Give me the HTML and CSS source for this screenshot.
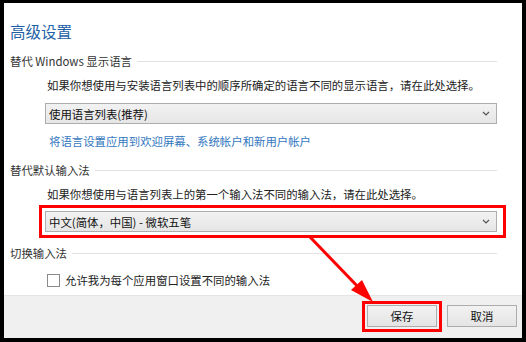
FILE: index.html
```html
<!DOCTYPE html>
<html lang="zh-CN">
  <head>
    <meta charset="UTF-8" />
    <title>高级设置</title>
    <link rel="stylesheet" href="styles.css">
  </head>
  <body>
    <div class="panel">
      <div class="content">
        <h1 class="title">高级设置</h1>

        <!-- 显示语言 -->
        <div class="group-header"><span>替代 Windows 显示语言</span></div>
        <p class="desc">如果你想使用与安装语言列表中的顺序所确定的语言不同的显示语言，请在此处选择。</p>
        <div class="dropdown dropdown-first">
          <span>使用语言列表(推荐)</span>
          <svg class="chevron" width="8" height="5" viewBox="0 0 8 5"><path d="M1 1 L4 4 L7 1" fill="none" stroke="#555" stroke-width="1.2"/></svg>
        </div>
        <a class="link" href="#">将语言设置应用到欢迎屏幕、系统帐户和新用户帐户</a>

        <!-- 输入法 -->
        <div class="group-header"><span>替代默认输入法</span></div>
        <p class="desc">如果你想使用与语言列表上的第一个输入法不同的输入法，请在此处选择。</p>
        <div class="dropdown dropdown-second">
          <span>中文(简体，中国) - 微软五笔</span>
          <svg class="chevron" width="8" height="5" viewBox="0 0 8 5"><path d="M1 1 L4 4 L7 1" fill="none" stroke="#555" stroke-width="1.2"/></svg>
        </div>

        <!-- 切换 -->
        <div class="group-header group-last"><span>切换输入法</span></div>
        <label class="check-row">
          <span class="checkbox"></span>
          <span>允许我为每个应用窗口设置不同的输入法</span>
        </label>
      </div>

      <div class="footer">
        <button class="btn">保存</button>
        <button class="btn">取消</button>
      </div>
    </div>

    <!-- 红色标注 -->
    <svg class="annotations" width="526" height="342" viewBox="0 0 526 342">
      <rect x="40.5" y="206.5" width="464" height="30" fill="none" stroke="#f00" stroke-width="3"/>
      <rect x="363.5" y="302.5" width="77" height="28" fill="none" stroke="#f00" stroke-width="3"/>
      <line x1="310" y1="237" x2="362" y2="291" stroke="#f00" stroke-width="3"/>
      <polygon points="373,302 351,290 362,280" fill="#f00"/>
    </svg>
  </body>
</html>
```

FILE: styles.css
```css
body {
  margin: 0;
  padding: 3px 4px 4px 4px;
  width: 518px;
  height: 335px;
  background: #000;
  font-family: "Noto Sans CJK SC", "Microsoft YaHei", sans-serif;
  font-size: 11.4px;
  color: #222;
  overflow: hidden;
  position: relative;
}

.panel {
  width: 518px;
  height: 335px;
  background: #fff;
  display: flex;
  flex-direction: column;
}

.content {
  padding: 16px 25px 0 6px;
  display: flex;
  flex-direction: column;
}

.title {
  margin: 0;
  height: 24px;
  line-height: 24px;
  font-size: 15.5px;
  font-weight: normal;
  color: #1f5fa6;
}

.group-header {
  display: flex;
  align-items: center;
  gap: 5px;
  height: 20px;
  line-height: 20px;
  margin-top: 8px;
  color: #333;
}

.group-header::after {
  content: "";
  flex-grow: 1;
  height: 1px;
  background: #e2e2e2;
}

.group-header + .desc {
  margin-top: 4px;
}

.desc {
  margin: 0 0 0 37px;
  height: 20px;
  line-height: 20px;
  white-space: nowrap;
}

.dropdown {
  margin: 8px 0 0 35px;
  height: 21px;
  box-sizing: border-box;
  border: 1px solid #adadad;
  background: linear-gradient(#f2f2f2, #e6e6e6);
  display: flex;
  align-items: center;
  justify-content: space-between;
  padding: 0 6px 0 3px;
  color: #111;
}

.dropdown-second {
  margin-top: 7px;
}

.chevron {
  display: block;
}

.link {
  display: block;
  margin: 7px 0 0 39px;
  height: 20px;
  line-height: 20px;
  color: #3377c0;
  text-decoration: none;
}

.link + .group-header {
  margin-top: 9px;
}

.group-last {
  margin-top: 11px;
}

.check-row {
  display: flex;
  align-items: center;
  gap: 5px;
  margin: 7px 0 0 37px;
  height: 20px;
  line-height: 20px;
}

.checkbox {
  width: 11px;
  height: 11px;
  border: 1px solid #8a8a8a;
  background: #fff;
}

.footer {
  margin-top: auto;
  height: 43px;
  box-sizing: border-box;
  background: #f0f0f0;
  border-top: 1px solid #e4e4e4;
  display: flex;
  justify-content: flex-end;
  align-items: flex-start;
  gap: 10px;
  padding: 9px 5px 0 0;
}

.btn {
  width: 70px;
  height: 22px;
  border: 1px solid #adadad;
  background: linear-gradient(#f2f2f2, #e4e4e4);
  font-family: inherit;
  font-size: 11.4px;
  color: #111;
  padding: 0;
}

.annotations {
  position: absolute;
  top: 0;
  left: 0;
  pointer-events: none;
}
```
